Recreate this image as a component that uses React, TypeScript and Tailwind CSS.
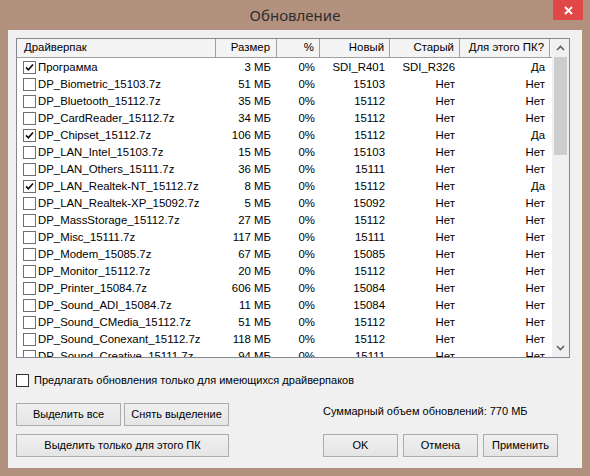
import React from "react";

type Row = { c: boolean; n: string; s: string; v: string; o: string; p: string };

const rows: Row[] = [
  { c: true, n: "Программа", s: "3 МБ", v: "SDI_R401", o: "SDI_R326", p: "Да" },
  { c: false, n: "DP_Biometric_15103.7z", s: "51 МБ", v: "15103", o: "Нет", p: "Нет" },
  { c: false, n: "DP_Bluetooth_15112.7z", s: "35 МБ", v: "15112", o: "Нет", p: "Нет" },
  { c: false, n: "DP_CardReader_15112.7z", s: "34 МБ", v: "15112", o: "Нет", p: "Нет" },
  { c: true, n: "DP_Chipset_15112.7z", s: "106 МБ", v: "15112", o: "Нет", p: "Да" },
  { c: false, n: "DP_LAN_Intel_15103.7z", s: "15 МБ", v: "15103", o: "Нет", p: "Нет" },
  { c: false, n: "DP_LAN_Others_15111.7z", s: "36 МБ", v: "15111", o: "Нет", p: "Нет" },
  { c: true, n: "DP_LAN_Realtek-NT_15112.7z", s: "8 МБ", v: "15112", o: "Нет", p: "Да" },
  { c: false, n: "DP_LAN_Realtek-XP_15092.7z", s: "5 МБ", v: "15092", o: "Нет", p: "Нет" },
  { c: false, n: "DP_MassStorage_15112.7z", s: "27 МБ", v: "15112", o: "Нет", p: "Нет" },
  { c: false, n: "DP_Misc_15111.7z", s: "117 МБ", v: "15111", o: "Нет", p: "Нет" },
  { c: false, n: "DP_Modem_15085.7z", s: "67 МБ", v: "15085", o: "Нет", p: "Нет" },
  { c: false, n: "DP_Monitor_15112.7z", s: "20 МБ", v: "15112", o: "Нет", p: "Нет" },
  { c: false, n: "DP_Printer_15084.7z", s: "606 МБ", v: "15084", o: "Нет", p: "Нет" },
  { c: false, n: "DP_Sound_ADI_15084.7z", s: "11 МБ", v: "15084", o: "Нет", p: "Нет" },
  { c: false, n: "DP_Sound_CMedia_15112.7z", s: "51 МБ", v: "15112", o: "Нет", p: "Нет" },
  { c: false, n: "DP_Sound_Conexant_15112.7z", s: "118 МБ", v: "15112", o: "Нет", p: "Нет" },
  { c: false, n: "DP_Sound_Creative_15111.7z", s: "94 МБ", v: "15111", o: "Нет", p: "Нет" },
];

const Check = ({ checked, dark }: { checked: boolean; dark?: boolean }) => (
  <span
    className={`w-[13px] h-[13px] border ${dark ? "border-[#333333]" : "border-[#707070]"} bg-white flex items-center justify-center shrink-0`}
  >
    {checked && (
      <svg width="9" height="9" viewBox="0 0 9 9">
        <path d="M1 4.3 L3.4 6.8 L8 1.5" stroke="#111" strokeWidth="1.7" fill="none" />
      </svg>
    )}
  </span>
);

const Btn = ({ label, w }: { label: string; w: string }) => (
  <div
    className={`${w} h-[23px] border border-[#acacac] bg-gradient-to-b from-[#f0f0f0] to-[#e5e5e5] flex items-center justify-center text-[11px] text-black`}
  >
    {label}
  </div>
);

export default function App() {
  return (
    <div
      className="w-[590px] h-[476px] bg-[#b3917f] flex flex-col overflow-hidden"
      style={{ fontFamily: '"Liberation Sans", Arial, sans-serif' }}
    >
      <div className="h-[30px] relative flex items-center justify-center shrink-0">
        <span
          className="text-[15px] text-[#2e2e2e] mt-[1px]"
          style={{ fontFamily: '"Noto Sans", "Open Sans", sans-serif' }}
        >
          Обновление
        </span>
        <div className="absolute right-[7px] top-0 w-[30px] h-[20px] bg-[#e04848] flex items-center justify-center">
          <svg width="9" height="9" viewBox="0 0 9 9">
            <path d="M1 1 L8 8 M8 1 L1 8" stroke="#fff" strokeWidth="1.8" />
          </svg>
        </div>
      </div>

      <div className="mx-[8px] mb-[8px] flex-1 bg-[#f0f0f0] pl-[8px] pt-[8px] flex flex-col text-[11px] text-black">
        <div className="w-[554px] h-[320px] border border-[#828790] bg-white flex text-[11.4px]">
          <div className="flex-1 flex flex-col overflow-hidden">
            <div className="h-[19px] flex shrink-0 bg-[#f4f4f4] border-b border-[#a0a0a0]">
              <div className="w-[199px] border-r border-[#a0a0a0] pl-[7px] flex items-center">Драйверпак</div>
              <div className="w-[61px] border-r border-[#a0a0a0] pr-[6px] flex items-center justify-end">Размер</div>
              <div className="w-[43px] border-r border-[#a0a0a0] pr-[5px] flex items-center justify-end">%</div>
              <div className="w-[70px] border-r border-[#a0a0a0] pr-[5px] flex items-center justify-end">Новый</div>
              <div className="w-[70px] border-r border-[#a0a0a0] pr-[5px] flex items-center justify-end">Старый</div>
              <div className="w-[90px] border-r border-[#a0a0a0] pr-[5px] flex items-center justify-end">Для этого ПК?</div>
            </div>
            <div className="flex flex-col pt-[1px]">
              {rows.map((r) => (
                <div key={r.n} className="h-[17px] flex items-center shrink-0">
                  <div className="w-[199px] pl-[6px] flex items-center gap-[2px] whitespace-nowrap">
                    <Check checked={r.c} />
                    <span>{r.n}</span>
                  </div>
                  <div className="w-[61px] pr-[6px] text-right">{r.s}</div>
                  <div className="w-[43px] pr-[5px] text-right">0%</div>
                  <div className="w-[70px] pr-[5px] text-right">{r.v}</div>
                  <div className="w-[70px] pr-[5px] text-right">{r.o}</div>
                  <div className="w-[90px] pr-[5px] text-right">{r.p}</div>
                </div>
              ))}
            </div>
          </div>
          <div className="w-[17px] bg-[#f0f0f0] flex flex-col items-center shrink-0">
            <div className="h-[18px] flex items-center justify-center">
              <svg width="9" height="6" viewBox="0 0 9 6">
                <path d="M1 5 L4.5 1.5 L8 5" stroke="#606060" strokeWidth="1.6" fill="none" />
              </svg>
            </div>
            <div className="w-[13px] h-[98px] bg-[#cdcdcd]" />
            <div className="flex-1" />
            <div className="h-[18px] flex items-center justify-center">
              <svg width="9" height="6" viewBox="0 0 9 6">
                <path d="M1 1 L4.5 4.5 L8 1" stroke="#606060" strokeWidth="1.6" fill="none" />
              </svg>
            </div>
          </div>
        </div>

        <div className="mt-[16px] flex items-center gap-[5px] h-[13px]">
          <Check checked={false} dark />
          <span className="text-[11px]">Предлагать обновления только для имеющихся драйверпаков</span>
        </div>

        <div className="mt-[16px] flex">
          <div className="w-[213px] flex gap-[3px]">
            <Btn label="Выделить все" w="w-[105px]" />
            <Btn label="Снять выделение" w="w-[105px]" />
          </div>
          <div className="ml-[94px] h-[23px] flex items-start">Суммарный объем обновлений: 770 МБ</div>
        </div>

        <div className="mt-[8px] flex">
          <Btn label="Выделить только для этого ПК" w="w-[213px]" />
          <div className="ml-[94px] flex gap-[5px]">
            <Btn label="OK" w="w-[75px]" />
            <Btn label="Отмена" w="w-[75px]" />
            <Btn label="Применить" w="w-[75px]" />
          </div>
        </div>
      </div>
    </div>
  );
}
